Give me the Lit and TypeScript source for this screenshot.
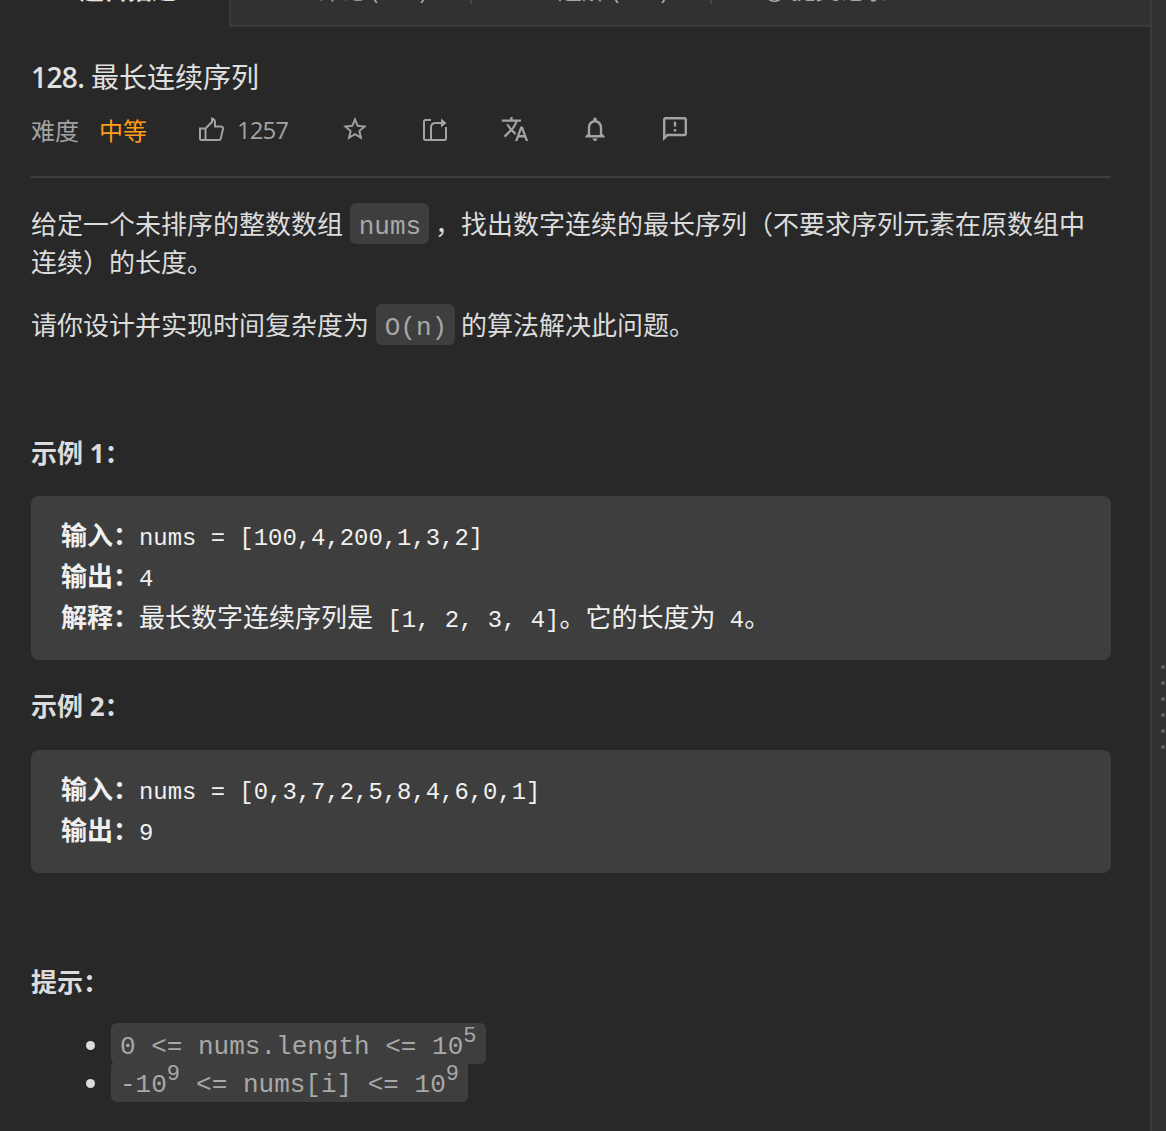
import { LitElement, html, svg, css } from 'lit';
import { customElement } from 'lit/decorators.js';

const sans = css`"Open Sans", "Noto Sans CJK SC", sans-serif`;
const mono = css`"Liberation Mono", "Noto Sans CJK SC", monospace`;

// material icons sit inside a 20 unit box of their 24 grid, so they are cropped to fill 24px
const icons = [
  { box: '2 2 20 20', d: svg`<path d="M22 9.24l-7.19-.62L12 2 9.19 8.63 2 9.24l5.46 4.73L5.82 21 12 17.27 18.18 21l-1.63-7.03L22 9.24zM12 15.4l-3.76 2.27 1-4.28-3.32-2.88 4.38-.38L12 6.1l1.71 4.04 4.38.38-3.32 2.88 1 4.28L12 15.4z"/>` },
  { box: '0 0 24 24', d: svg`<path fill="none" stroke="currentColor" stroke-width="2" d="M8 3H2.500A1.500 1.500 0 0 0 1 4.500V21.500A1.500 1.500 0 0 0 2.500 23H21.500A1.500 1.500 0 0 0 23 21.500V10"/><path fill="none" stroke="currentColor" stroke-width="2" d="M8 22V10.500Q8 6 12.500 6H19"/><path d="M18 1.500L23.500 6 18 10.500z"/>` },
  { box: '2 2 20 20', d: svg`<path d="M12.870 15.070l-2.540-2.510.03-.03c1.740-1.940 2.980-4.170 3.710-6.530H17V4h-7V2H8v2H1v1.990h11.170C11.500 7.920 10.440 9.750 9 11.350 8.070 10.320 7.300 9.190 6.690 8h-2c.73 1.630 1.730 3.170 2.980 4.560l-5.090 5.020L4 19l5-5 3.110 3.110.76-2.040zM18.500 10h-2L12 22h2l1.120-3h4.750L21 22h2l-4.500-12zm-2.620 7l1.620-4.330L19.120 17h-3.240z"/>` },
  { box: '2 2 20 20', d: svg`<path d="M12 22c1.100 0 2-.9 2-2h-4c0 1.100.89 2 2 2zm6-6v-5c0-3.070-1.640-5.640-4.500-6.320V4c0-.83-.67-1.500-1.500-1.500s-1.500.67-1.500 1.500v.68C7.630 5.360 6 7.920 6 11v5l-2 2v1h16v-1l-2-2zm-2 1H8v-6c0-2.480 1.510-4.500 4-4.500s4 2.020 4 4.500v6z"/>` },
  { box: '2 2 20 20', d: svg`<path d="M20 2H4c-1.100 0-1.990.9-1.990 2L2 22l4-4h14c1.100 0 2-.9 2-2V4c0-1.100-.9-2-2-2zm0 14H5.170L4 17.170V4h16v12zm-9-4h2v2h-2zm0-6h2v4h-2z"/>` },
];

@customElement('app-root')
export class AppRoot extends LitElement {
  static styles = css`
    :host {
      display: flex;
      width: 1166px;
      height: 1131px;
      overflow: hidden;
      background: #313131;
      font-family: ${sans};
      color: #dcdcdc;
    }
    .main {
      width: 1152px;
      border-right: 2px solid #3a3a3a;
      box-sizing: border-box;
      background: #282828;
      flex: none;
    }
    .gutter {
      flex: 1;
      display: flex;
      flex-direction: column;
      align-items: flex-end;
      gap: 12px;
      padding: 665px 1px 0 0;
    }
    .gutter i {
      width: 4px;
      height: 4px;
      border-radius: 50%;
      background: #636363;
    }
    .tabs {
      display: flex;
      height: 27px;
      overflow: hidden;
    }
    .tab {
      box-sizing: border-box;
      height: 27px;
      font-size: 24px;
      line-height: 30px;
      white-space: nowrap;
      color: #a8a8a8;
      background: #313131;
      border-bottom: 2px solid #3a3a3a;
      position: relative;
    }
    .tab span {
      display: block;
      margin-top: -25px;
    }
    .tab.on {
      width: 231px;
      padding-left: 80px;
      background: #282828;
      border-bottom: 0;
      border-right: 2px solid #3a3a3a;
      color: #e6e6e6;
      font-weight: 600;
    }
    .tab.two { width: 241px; padding-left: 86px; }
    .tab.three { width: 240px; padding-left: 86px; }
    .tab.two::after, .tab.three::after {
      content: '';
      position: absolute;
      top: 0;
      right: 0;
      width: 2px;
      height: 4px;
      background: #484848;
    }
    .tab.four { flex: 1; padding-left: 52px; }
    .body {
      padding: 0 39px 0 31px;
    }
    h1 {
      margin: 0;
      padding-top: 29px;
      font-size: 28px;
      line-height: 42px;
      font-weight: 400;
      color: #e0e0e0;
    }
    h1 span {
      font-weight: 600;
      letter-spacing: -0.6px;
    }
    .meta {
      display: flex;
      align-items: center;
      height: 46px;
      margin-top: 8px;
      font-size: 24px;
      color: #a3a3a3;
    }
    .level {
      margin-left: 20px;
      color: #ff9d14;
    }
    .like {
      display: flex;
      align-items: center;
      margin-left: 52px;
      width: 144px;
      gap: 13px;
      letter-spacing: -1px;
    }
    .acts {
      display: flex;
      gap: 56px;
    }
    svg {
      display: block;
      width: 24px;
      height: 24px;
      overflow: visible;
      fill: currentColor;
      color: #a3a3a3;
    }
    .like svg { width: 25px; }
    hr {
      margin: 24px 0 0;
      border: 0;
      height: 2px;
      background: #3e3e3e;
    }
    p {
      margin: 0;
      font-size: 26px;
      line-height: 38px;
      color: #dcdcdc;
    }
    .lead {
      margin-top: 27px;
      padding-right: 20px;
    }
    .lead + p {
      margin-top: 25px;
    }
    h4 {
      margin: 0;
      font-size: 26px;
      line-height: 38px;
      font-weight: 700;
      color: #dcdcdc;
    }
    code {
      font-family: ${mono};
      font-size: 26px;
      line-height: 1;
      padding: 9px 8px 2px 9px;
      margin-right: -1px;
      border-radius: 6px;
      background: #3e3e3e;
      color: #a8a8a8;
    }
    li code {
      padding-right: 9px;
    }
    sup {
      font-size: 22px;
      line-height: 0;
      vertical-align: 12px;
      padding-right: 0.5px;
    }
    pre {
      margin: 24px 0 0;
      padding: 22px 30px 19px;
      border-radius: 8px;
      background: #3e3e3e;
      font-family: ${mono};
      font-size: 23.9px;
      line-height: 41px;
      color: #f0f0f0;
    }
    pre.second { margin-top: 25px; }
    pre b, pre .cn {
      font-family: ${sans};
      font-size: 26px;
      line-height: 1;
    }
    pre b {
      font-weight: 700;
    }
    .ex1 { margin-top: 90px; }
    .ex2 { margin-top: 27px; }
    .hints { margin-top: 90px; }
    ul {
      margin: 24px 0 0;
      padding: 0 0 0 80px;
      font-size: 26px;
      line-height: 38px;
      color: #dcdcdc;
    }
  `;

  render() {
    return html`
      <div class="main">
        <div class="tabs">
          <div class="tab on"><span>题目描述</span></div>
          <div class="tab two"><span>评论 (987)</span></div>
          <div class="tab three"><span>题解 (987)</span></div>
          <div class="tab four"><span>◷ 提交记录</span></div>
        </div>
        <div class="body">
          <h1><span>128. </span>最长连续序列</h1>
          <div class="meta">
            <span>难度</span>
            <span class="level">中等</span>
            <div class="like">
              <svg viewBox="0 0 25 24">
                <path fill="none" stroke="currentColor" stroke-width="2" d="M1 11.500h5.500V23H2.500A1.500 1.500 0 0 1 1 21.500zM6.500 11.500L13 5V1.500c2 .5 3 2 3 4V9.500h6a2 2 0 0 1 2 2.400L21.800 21.500a2 2 0 0 1-2 1.500H6.500"/>
              </svg>
              <span>1257</span>
            </div>
            <div class="acts">
              ${icons.map((i) => html`<svg viewBox=${i.box}>${i.d}</svg>`)}
            </div>
          </div>
          <hr />
          <p class="lead">给定一个未排序的整数数组 <code>nums</code> ，找出数字连续的最长序列（不要求序列元素在原数组中连续）的长度。</p>
          <p>请你设计并实现时间复杂度为 <code>O(n)</code> 的算法解决此问题。</p>
          <h4 class="ex1">示例 1：</h4>
          <pre><b>输入：</b>nums = [100,4,200,1,3,2]
<b>输出：</b>4
<b>解释：</b><span class="cn">最长数字连续序列是</span> [1, 2, 3, 4]<span class="cn">。它的长度为</span> 4<span class="cn">。</span></pre>
          <h4 class="ex2">示例 2：</h4>
          <pre class="second"><b>输入：</b>nums = [0,3,7,2,5,8,4,6,0,1]
<b>输出：</b>9</pre>
          <h4 class="hints">提示：</h4>
          <ul>
            <li><code>0 &lt;= nums.length &lt;= 10<sup>5</sup></code></li>
            <li><code>-10<sup>9</sup> &lt;= nums[i] &lt;= 10<sup>9</sup></code></li>
          </ul>
        </div>
      </div>
      <div class="gutter">${[0, 1, 2, 3, 4, 5].map(() => html`<i></i>`)}</div>
    `;
  }
}
